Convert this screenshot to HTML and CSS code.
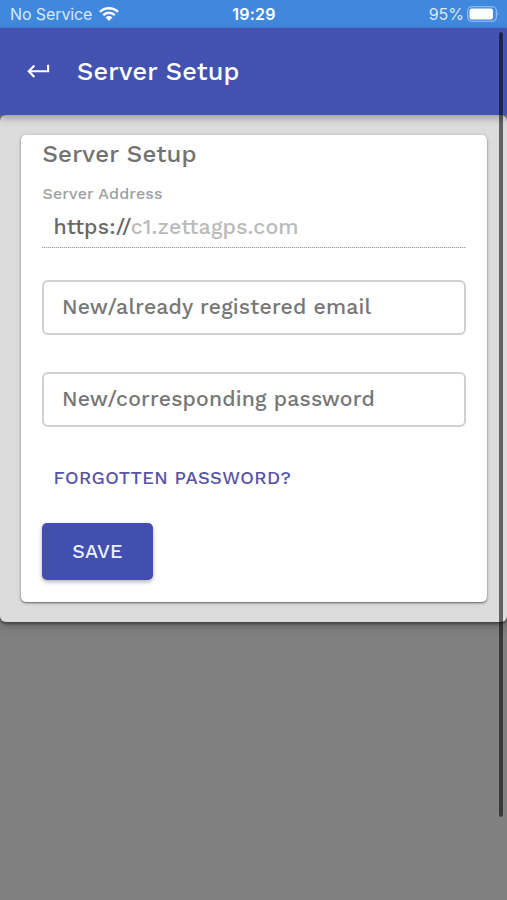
FILE: index.html
```html
<!DOCTYPE html>
<html lang="en">
<head>
<meta charset="utf-8">
<title>Server Setup</title>
<link rel="stylesheet" href="styles.css">
</head>
<body>
<div class="status">
  <div class="status-left">
    <span class="carrier">No Service</span>
    <svg class="wifi" viewBox="0 0 20 14"><path d="M1 4.9a13.2 13.2 0 0 1 18 0M4.2 8.1a8.6 8.6 0 0 1 11.6 0" fill="none" stroke="#fff" stroke-width="2.5"/><path d="M6.5 10.4a5.1 5.1 0 0 1 7 0L10 14z" fill="#fff"/></svg>
  </div>
  <span class="time">19:29</span>
  <div class="status-right">
    <span class="percent">95%</span>
    <svg class="battery" viewBox="0 0 32 16"><rect x=".7" y=".7" width="28.6" height="14.6" rx="4" fill="none" stroke="#a2c3ef" stroke-width="1.1"/><rect x="2.5" y="2.5" width="23.5" height="11" rx="2.2" fill="#fff"/><path d="M30.6 5.8q1.5 2.2 0 4.4z" fill="#a2c3ef"/></svg>
  </div>
</div>
<header class="bar">
  <svg class="back" viewBox="0 0 24 16"><path d="M22 1.6v6.6H2M7.7 2.2 1.8 8.2l5.9 6" fill="none" stroke="#fff" stroke-width="2.2"/></svg>
  <h1>Server Setup</h1>
</header>
<main class="panel">
  <form class="card">
    <h2>Server Setup</h2>
    <div class="label">Server Address</div>
    <div class="address"><span class="scheme">https://</span><span class="host">c1.zettagps.com</span></div>
    <div class="field">New/already registered email</div>
    <div class="field">New/corresponding password</div>
    <a class="forgot">FORGOTTEN PASSWORD?</a>
    <button type="button" class="save">SAVE</button>
  </form>
</main>
<div class="scrollbar"></div>
</body>
</html>
```
FILE: styles.css
```css
* { box-sizing: border-box; }
body {
  margin: 0;
  height: 900px;
  overflow: hidden;
  background: #808080;
  font-family: "Work Sans", Inter, "Liberation Sans", sans-serif;
  font-weight: 500;
}
.status {
  height: 28px;
  padding: 0 9px 0 10px;
  display: grid;
  grid-template-columns: 1fr auto 1fr;
  align-items: center;
  background: #4087de;
  color: #fff;
  font-family: Inter, sans-serif;
  font-size: 16px;
  line-height: 24px;
}
.status-left, .status-right { display: flex; align-items: center; }
.status-left { gap: 7px; }
.status-right { justify-content: flex-end; gap: 3px; }
.carrier, .percent { color: #d9e8fb; font-weight: 400; white-space: nowrap; }
.carrier { letter-spacing: -.1px; }
.time { font-weight: 600; letter-spacing: .2px; }
.wifi { width: 20px; height: 14px; }
.battery { width: 32px; height: 16px; margin-right: -1px; }
.bar {
  position: relative;
  z-index: 1;
  height: 87px;
  padding: 0 27px;
  display: flex;
  align-items: center;
  background: #4352b1;
  color: #fff;
  box-shadow: 0 3px 8px rgba(0, 0, 0, .3);
}
.back { width: 23px; height: 16px; margin-top: -2px; }
h1, h2 { margin: 0; font-weight: 500; letter-spacing: .0075em; white-space: nowrap; }
h1 { margin-left: 27px; padding-bottom: 2px; font-size: 25.3px; }
.panel {
  height: 507px;
  padding: 20px 20px 0 21px;
  border-radius: 6px;
  background: #dcdcdc;
  box-shadow: 0 2px 3px rgba(0, 0, 0, .4), 0 4px 12px rgba(0, 0, 0, .22);
}
.card {
  height: 467px;
  padding: 5px 21px 0;
  display: flex;
  flex-direction: column;
  border-radius: 5px;
  background: #fff;
  box-shadow: 0 1px 2px rgba(0, 0, 0, .5), 0 1px 5px rgba(0, 0, 0, .12);
}
h2 { padding-left: .5px; color: #727272; font-size: 24px; line-height: 28px; }
.label { margin-top: 16px; padding-left: .5px; color: #a0a0a0; font-size: 16px; line-height: 20px; letter-spacing: .00938em; }
.address {
  height: 44px;
  padding-left: 11.6px;
  font-size: 21.3px;
  line-height: 45px;
  letter-spacing: .00938em;
  white-space: nowrap;
  background: repeating-linear-gradient(90deg, #a0a0a0 0 1px, #e2e2e2 1px 2px) bottom / 100% 1.5px no-repeat;
}
.scheme { color: #686868; }
.host { color: #bababa; }
.field {
  height: 55px;
  padding-left: 18px;
  border: 2px solid #d0d0d0;
  border-radius: 6px;
  color: #777;
  font-size: 21.2px;
  line-height: 49px;
  letter-spacing: .00938em;
  white-space: nowrap;
}
.address + .field { margin-top: 32px; }
.field + .field { margin-top: 37px; }
.forgot { margin: 39px 0 0 11.5px; color: #5753a6; font-size: 18.3px; line-height: 24px; letter-spacing: .023em; white-space: nowrap; }
.save {
  width: 111px;
  height: 57px;
  margin-top: 33px;
  padding: 0;
  border: 0;
  border-radius: 5px;
  background: #434fb0;
  color: #e9f2ff;
  font: inherit;
  font-size: 19.6px;
  letter-spacing: .01em;
  box-shadow: 0 2px 4px rgba(0, 0, 0, .3);
}
.scrollbar {
  position: absolute;
  z-index: 2;
  top: 32px;
  right: 4px;
  width: 4px;
  height: 785px;
  border-radius: 2px;
  background: rgba(0, 0, 0, .56);
  box-shadow: 0 0 1px rgba(255, 255, 255, .35);
}
```
